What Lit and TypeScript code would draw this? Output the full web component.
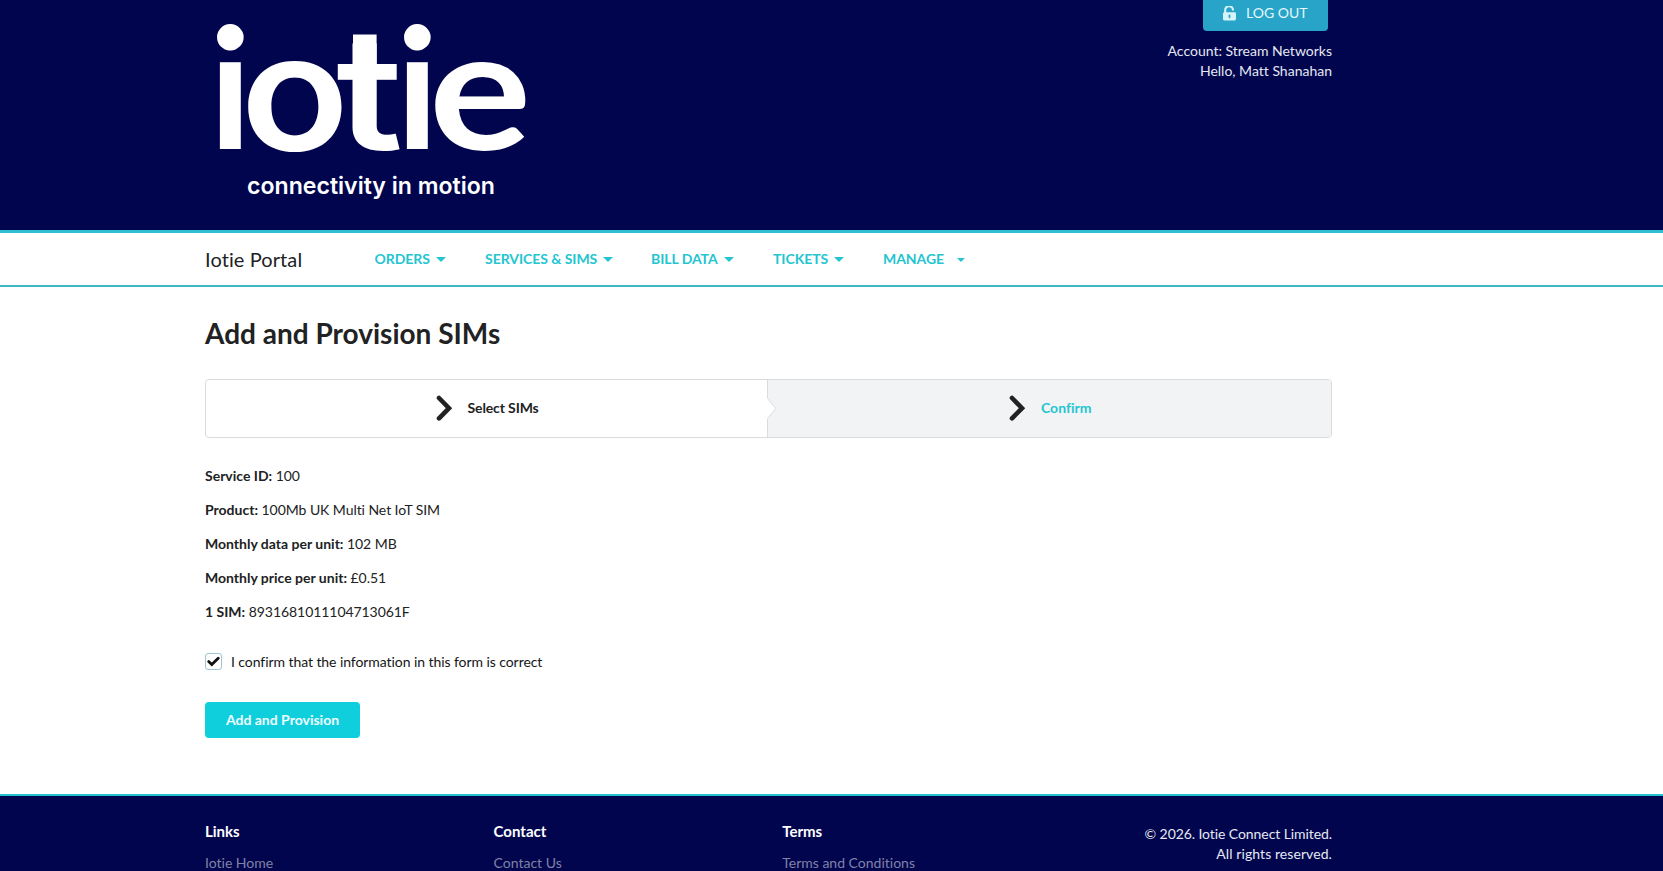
import { LitElement, html, css, svg } from "lit";
import { customElement } from "lit/decorators.js";

const MENU = [
  { label: "ORDERS", cls: "orders" },
  { label: "SERVICES & SIMS", cls: "services" },
  { label: "BILL DATA", cls: "bill" },
  { label: "TICKETS", cls: "tickets" },
  { label: "MANAGE", cls: "manage" },
];

const DETAILS = [
  ["Service ID:", "100"],
  ["Product:", "100Mb UK Multi Net IoT SIM"],
  ["Monthly data per unit:", "102 MB"],
  ["Monthly price per unit:", "£0.51"],
  ["1 SIM:", "8931681011104713061F"],
];

const FOOTER = [
  ["Links", "Iotie Home"],
  ["Contact", "Contact Us"],
  ["Terms", "Terms and Conditions"],
];

const chevron = svg`<path d="M3 3 L13 13.2 L3 23.4" fill="none" stroke="#212223" stroke-width="4.6" stroke-linecap="round" stroke-linejoin="miter"/>`;

@customElement("app-root")
export class AppRoot extends LitElement {
  static styles = css`
    :host {
      display: flex;
      flex-direction: column;
      height: 871px;
      overflow: hidden;
      background: #fff;
      color: #212223;
      font: 14px/20px Lato, "Liberation Sans", sans-serif;
      font-variant-ligatures: none;
    }
    * { box-sizing: border-box; }
    p, h1, h4 { margin: 0; }
    .wrap { width: 1127px; margin-left: 205px; }
    header {
      flex: none;
      height: 233px;
      background: #00054e;
      border-bottom: 3px solid #2bbfd0;
    }
    .head { display: flex; justify-content: space-between; }
    .logo { display: block; width: 330px; height: 220px; overflow: visible; }
    .logo text { fill: #fff; }
    .word { font-family: Lato, sans-serif; font-size: 168px; font-weight: 700; }
    .round { font-family: Inter, sans-serif; font-size: 158px; font-weight: 600; }
    .tag { font-family: Inter, sans-serif; font-size: 24px; font-weight: 600; }
    .account { display: flex; flex-direction: column; align-items: flex-end; color: #e6e8f2; }
    .logout {
      display: flex;
      width: 125px;
      height: 31px;
      margin: 0 4px 10px 0;
      padding: 3px 0 0 20px;
      border-radius: 0 0 4px 4px;
      background: #28a4c8;
      color: #e6f8fc;
    }
    .logout svg { margin: 3px 10px 0 0; }
    nav {
      flex: none;
      height: 54px;
      border-bottom: 2px solid #40b8c0;
    }
    .bar { display: flex; height: 52px; align-items: center; }
    .brand { width: 169.5px; font-size: 20px; letter-spacing: 0.1px; }
    .item { display: flex; align-items: center; font-weight: 700; color: #24c5d0; letter-spacing: -0.05px; }
    .orders { width: 110.5px; }
    .services { width: 166px; }
    .bill { width: 122px; }
    .tickets { width: 110px; }
    .caret { border: 5px solid transparent; border-top: 5px solid #24c5d0; border-bottom: 0; margin-left: 6px; margin-top: 1px; }
    .manage .caret { border-width: 4px 4px 0; margin-left: 12.5px; }
    main { flex: none; height: 507px; }
    h1 { padding-top: 28px; font-size: 28px; line-height: 36px; font-weight: 700; }
    .steps {
      display: grid;
      grid-template-columns: 562px 1fr;
      height: 59px;
      margin-top: 28px;
      border: 1px solid #dadbdc;
      border-radius: 4px;
      overflow: hidden;
    }
    .step { position: relative; display: flex; align-items: center; font-weight: 700; letter-spacing: -0.12px; padding-bottom: 1px; }
    .step svg { flex: none; }
    .one { padding-left: 229.5px; gap: 14px; border-right: 1px solid #dadbdc; }
    .two { padding-left: 241px; gap: 14px; background: #f2f3f5; color: #24c5d0; letter-spacing: 0; }
    .notch { position: absolute; left: -2px; top: 18px; }
    .details { display: grid; gap: 14px; margin-top: 28px; letter-spacing: -0.06px; }
    .details b { letter-spacing: 0; }
    .check { display: flex; align-items: center; gap: 9px; margin-top: 30px; color: #151515; letter-spacing: -0.07px; }
    .box { display: grid; place-items: center; width: 17px; height: 17px; margin-bottom: 1px; border: 1px solid #9fc6d2; border-radius: 3px; }
    .submit {
      display: block;
      width: 155px;
      height: 36px;
      margin-top: 30px;
      border: 0;
      border-radius: 4px;
      background: #0fcfdd;
      color: #f0fdff;
      font: 700 14px/14px Lato, sans-serif;
    }
    footer {
      flex: 1;
      border-top: 2px solid #25c1cf;
      background: #00054e;
      overflow: hidden;
      color: #fff;
    }
    .foot { display: grid; grid-template-columns: 288.6px 288.6px 1fr auto; padding-top: 25px; }
    h4 { font-size: 15px; line-height: 20px; }
    .link { margin-top: 12px; color: #8082a6; }
    .copy { text-align: right; padding-top: 3px; color: #e6e8f2; letter-spacing: -0.08px; }
    .rights { letter-spacing: 0.08px; }
  `;

  render() {
    return html`
      <header>
        <div class="wrap head">
          <svg class="logo" viewBox="205 0 330 220">
            <text class="word" y="149" x="209">i</text>
            <text class="round" transform="translate(240.5 149.5) scale(1.13 1.02)">o</text>
            <text class="round" transform="translate(336 149.5) scale(1.2 1)">t</text>
            <rect x="353" y="34.5" width="23.6" height="40" fill="#fff"/>
            <text class="word" y="149" x="396">i</text>
            <text class="word" transform="translate(429 149.5) scale(1.14 1.01)">e</text>
            <text class="tag" x="247" y="194" textLength="248" lengthAdjust="spacingAndGlyphs">connectivity in motion</text>
          </svg>
          <div class="account">
            <div class="logout">
              <svg width="13" height="15" viewBox="0 0 13 15">
                <path d="M2.2 7V4.3a3.9 3.9 0 0 1 7.8-.6" fill="none" stroke="#d5f4fa" stroke-width="2.1" stroke-linecap="round"/>
                <rect x="0" y="6.2" width="13" height="8.3" rx="1.4" fill="#d5f4fa"/>
                <rect x="5.6" y="8.6" width="1.8" height="3.6" rx=".9" fill="#28a4c8"/>
              </svg>
              <span>LOG OUT</span>
            </div>
            <span>Account: Stream Networks</span>
            <span>Hello, Matt Shanahan</span>
          </div>
        </div>
      </header>
      <nav>
        <div class="wrap bar">
          <div class="brand">Iotie Portal</div>
          ${MENU.map((m) => html`<div class="item ${m.cls}">${m.label}<i class="caret"></i></div>`)}
        </div>
      </nav>
      <main>
        <div class="wrap">
          <h1>Add and Provision SIMs</h1>
          <div class="steps">
            <div class="step one">
              <svg width="18" height="27" viewBox="0 0 18 27">${chevron}</svg>Select SIMs
            </div>
            <div class="step two">
              <svg class="notch" width="11" height="21" viewBox="0 0 11 21">
                <path d="M0 0H1.5L9.8 10.5L1.5 21H0Z" fill="#fff"/>
                <path d="M1.5 .5L9.8 10.5L1.5 20.5" fill="none" stroke="#dadbdc"/>
              </svg>
              <svg width="18" height="27" viewBox="0 0 18 27">${chevron}</svg>Confirm
            </div>
          </div>
          <div class="details">
            ${DETAILS.map(([k, v]) => html`<p><b>${k}</b> ${v}</p>`)}
          </div>
          <div class="check">
            <span class="box">
              <svg width="13" height="11" viewBox="0 0 13 11">
                <path d="M1.7 5.6L4.8 8.6L11.2 2.2" fill="none" stroke="#111" stroke-width="2.8" stroke-linecap="round"/>
              </svg>
            </span>
            <span>I confirm that the information in this form is correct</span>
          </div>
          <button class="submit">Add and Provision</button>
        </div>
      </main>
      <footer>
        <div class="wrap foot">
          ${FOOTER.map(([t, l]) => html`<div><h4>${t}</h4><p class="link">${l}</p></div>`)}
          <div class="copy"><p>© 2026. Iotie Connect Limited.</p><p class="rights">All rights reserved.</p></div>
        </div>
      </footer>
    `;
  }
}
